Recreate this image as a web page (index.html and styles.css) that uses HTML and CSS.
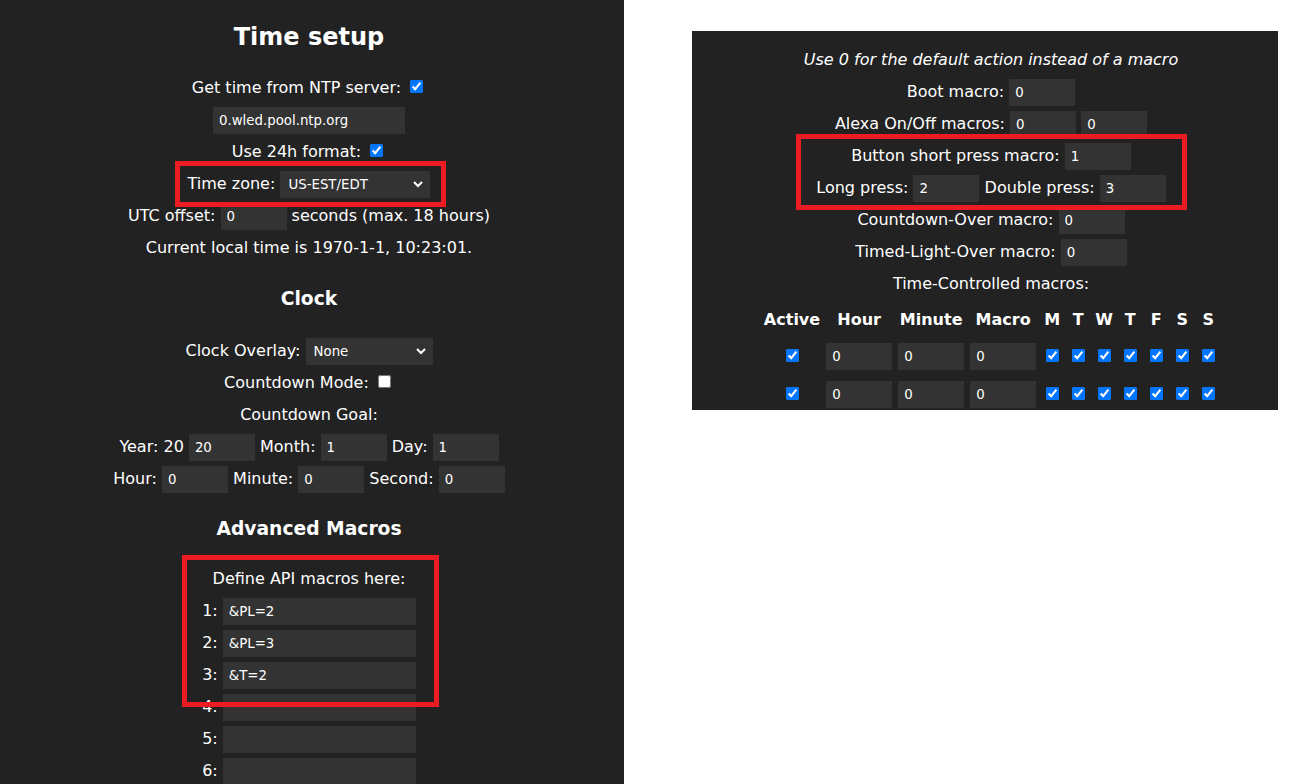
FILE: index.html
```html
<!DOCTYPE html>
<html lang="en">
<head>
<meta charset="utf-8">
<title>Time setup</title>
<link rel="stylesheet" href="styles.css">
</head>
<body>
<div class="page">
  <section class="left">
    <div class="content">
      <h2 class="h2">Time setup</h2>
      <div class="ln">Get time from NTP server: <input type="checkbox" class="cb" checked></div>
      <div class="ln"><input type="text" class="inp ntp" value="0.wled.pool.ntp.org"></div>
      <div class="ln">Use 24h format: <input type="checkbox" class="cb" checked></div>
      <div class="ln">Time zone: <select class="sel sel-tz"><option>US-EST/EDT</option></select></div>
      <div class="ln">UTC offset: <input type="text" class="inp num" value="0"> seconds (max. 18 hours)</div>
      <div class="ln">Current local time is 1970-1-1, 10:23:01.</div>

      <h3 class="h3 h3-clock">Clock</h3>
      <div class="ln">Clock Overlay: <select class="sel sel-co"><option>None</option></select></div>
      <div class="ln">Countdown Mode: <input type="checkbox" class="cb"></div>
      <div class="ln">Countdown Goal:</div>
      <div class="ln">Year: 20 <input type="text" class="inp num" value="20"> Month: <input type="text" class="inp num" value="1"> Day: <input type="text" class="inp num" value="1"></div>
      <div class="ln">Hour: <input type="text" class="inp num" value="0"> Minute: <input type="text" class="inp num" value="0"> Second: <input type="text" class="inp num" value="0"></div>

      <h3 class="h3 h3-adv">Advanced Macros</h3>
      <div class="ln">Define API macros here:</div>
      <div class="ln">1: <input type="text" class="inp mac" value="&amp;PL=2"></div>
      <div class="ln">2: <input type="text" class="inp mac" value="&amp;PL=3"></div>
      <div class="ln">3: <input type="text" class="inp mac" value="&amp;T=2"></div>
      <div class="ln">4: <input type="text" class="inp mac" value=""></div>
      <div class="ln">5: <input type="text" class="inp mac" value=""></div>
      <div class="ln">6: <input type="text" class="inp mac" value=""></div>
      <div class="ln">7: <input type="text" class="inp mac" value=""></div>
    </div>
  </section>

  <section class="right">
    <div class="ln"><i>Use 0 for the default action instead of a macro</i></div>
    <div class="ln">Boot macro: <input type="text" class="inp num" value="0"></div>
    <div class="ln">Alexa On/Off macros: <input type="text" class="inp num" value="0"> <input type="text" class="inp num" value="0"></div>
    <div class="ln">Button short press macro: <input type="text" class="inp num" value="1"></div>
    <div class="ln">Long press: <input type="text" class="inp num" value="2"> Double press: <input type="text" class="inp num" value="3"></div>
    <div class="ln">Countdown-Over macro: <input type="text" class="inp num" value="0"></div>
    <div class="ln">Timed-Light-Over macro: <input type="text" class="inp num" value="0"></div>
    <div class="ln">Time-Controlled macros:</div>
    <table class="tmt">
      <tr>
        <th class="c-act">Active</th><th class="c-num">Hour</th><th class="c-num">Minute</th><th class="c-num">Macro</th>
        <th class="c-day">M</th><th class="c-day">T</th><th class="c-day">W</th><th class="c-day">T</th><th class="c-day">F</th><th class="c-day">S</th><th class="c-day">S</th>
      </tr>
      <tr>
        <td><input type="checkbox" class="cb tcb" checked></td>
        <td><input type="text" class="inp num tinp" value="0"></td>
        <td><input type="text" class="inp num tinp" value="0"></td>
        <td><input type="text" class="inp num tinp" value="0"></td>
        <td><input type="checkbox" class="cb tcb" checked></td>
        <td><input type="checkbox" class="cb tcb" checked></td>
        <td><input type="checkbox" class="cb tcb" checked></td>
        <td><input type="checkbox" class="cb tcb" checked></td>
        <td><input type="checkbox" class="cb tcb" checked></td>
        <td><input type="checkbox" class="cb tcb" checked></td>
        <td><input type="checkbox" class="cb tcb" checked></td>
      </tr>
      <tr>
        <td><input type="checkbox" class="cb tcb" checked></td>
        <td><input type="text" class="inp num tinp" value="0"></td>
        <td><input type="text" class="inp num tinp" value="0"></td>
        <td><input type="text" class="inp num tinp" value="0"></td>
        <td><input type="checkbox" class="cb tcb" checked></td>
        <td><input type="checkbox" class="cb tcb" checked></td>
        <td><input type="checkbox" class="cb tcb" checked></td>
        <td><input type="checkbox" class="cb tcb" checked></td>
        <td><input type="checkbox" class="cb tcb" checked></td>
        <td><input type="checkbox" class="cb tcb" checked></td>
        <td><input type="checkbox" class="cb tcb" checked></td>
      </tr>
    </table>
  </section>

  <div class="mark mark-tz"></div>
  <div class="mark mark-api"></div>
  <div class="mark mark-btn"></div>
</div>
</body>
</html>
```

FILE: styles.css
```css
html, body {
  margin: 0;
  padding: 0;
  background: #fff;
}

.page {
  position: relative;
  display: flex;
  align-items: flex-start;
  width: 1292px;
  height: 784px;
  overflow: hidden;
  font-family: "DejaVu Sans", Verdana, sans-serif;
  font-size: 16px;
  color: #fff;
}

.left {
  flex: 0 0 auto;
  width: 624px;
  height: 784px;
  background: #222;
  overflow: hidden;
  box-sizing: border-box;
  padding-right: 6px;
}

.content {
  text-align: center;
}

.h2 {
  font-size: 24px;
  font-weight: bold;
  line-height: 32px;
  margin: 21px 0 19px;
}

.h3 {
  font-size: 18.72px;
  font-weight: bold;
  line-height: 32px;
}

.h3-clock {
  margin: 18.5px 0 20px;
}

.h3-adv {
  margin: 18px 0 18px;
}

.ln {
  line-height: 32px;
  height: 32px;
  white-space: nowrap;
}

.inp {
  box-sizing: border-box;
  height: 27px;
  background: #333;
  color: #fff;
  border: 4.25px solid #333;
  padding: 1px 2px;
  margin: 0;
  font-family: "DejaVu Sans", Verdana, sans-serif;
  font-size: 13.33px;
  outline: none;
  vertical-align: baseline;
}

.ntp { width: 192px; }
.num { width: 66px; }
.mac { width: 193px; }

.sel {
  box-sizing: border-box;
  height: 27px;
  background: #333;
  color: #fff;
  border: 4.25px solid #333;
  margin: 0;
  font-family: "DejaVu Sans", Verdana, sans-serif;
  font-size: 13.33px;
  vertical-align: baseline;
}

.sel-tz { width: 150px; }
.sel-co { width: 127px; }

.cb {
  width: 13px;
  height: 13px;
  margin: 3px 3px 3px 4px;
}

.right {
  flex: 0 0 auto;
  box-sizing: border-box;
  width: 586px;
  height: 379px;
  margin: 31px 0 0 68px;
  padding: 12.5px 0 0 12px;
  background: #222;
  overflow: hidden;
  text-align: center;
}

.tmt {
  margin: 0 auto;
  border-spacing: 2px;
}

.tmt th,
.tmt td {
  padding: 2px;
  line-height: 32px;
  height: 32px;
  text-align: center;
  vertical-align: top;
}

.tmt th {
  font-weight: bold;
}

.c-act { width: 56px; }
.c-num { width: 66px; }
.c-day { width: 20px; }

.tinp {
  vertical-align: top;
  margin-top: 1.5px;
}

.tcb {
  vertical-align: top;
  margin-top: 7.5px;
}

.mark {
  position: absolute;
  box-sizing: border-box;
  border: 5px solid #ed1c24;
  pointer-events: none;
}

.mark-tz {
  left: 175px;
  top: 161px;
  width: 271px;
  height: 46px;
}

.mark-api {
  left: 182px;
  top: 555px;
  width: 257px;
  height: 152px;
}

.mark-btn {
  left: 796px;
  top: 134px;
  width: 391px;
  height: 76px;
}
```
